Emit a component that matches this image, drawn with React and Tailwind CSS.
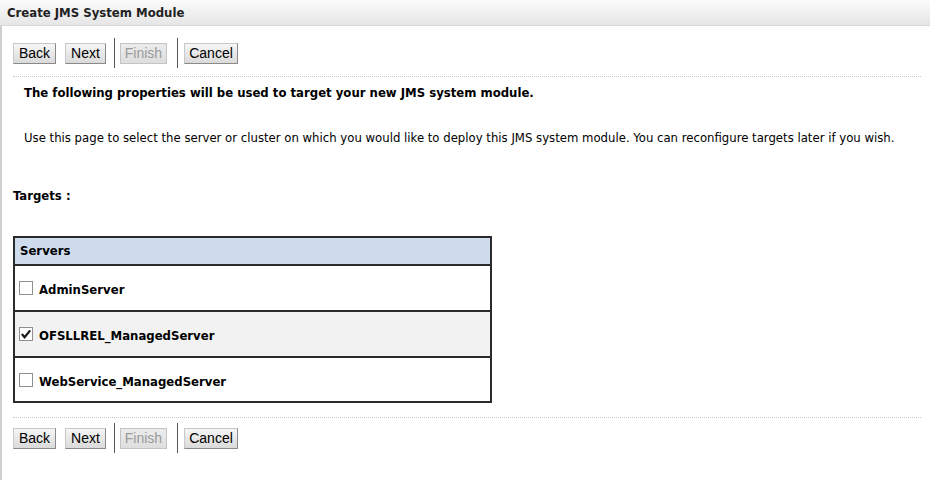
import React from 'react'

const font = "font-['Tahoma','DejaVu_Sans_Condensed','Liberation_Sans',sans-serif]"

const Btn = ({ children, disabled, w }) => (
  <button
    className={`${w} h-[21px] border text-[14px] leading-none font-['Liberation_Sans',Arial,sans-serif] bg-gradient-to-b ${
      disabled
        ? 'from-[#ececec] to-[#dedede] border-[#c4c4c4] text-[#9a9a9a]'
        : 'from-[#f6f6f6] to-[#dadada] border-t-[#c8c8c8] border-l-[#c8c8c8] border-r-[#8a8a8a] border-b-[#8a8a8a] text-black'
    }`}
  >
    {children}
  </button>
)

const Sep = () => <div className="w-px h-[30px] bg-[#555]" />

const ButtonBar = () => (
  <div className="flex items-center h-[30px] pl-[11px]">
    <Btn w="w-[43px]">Back</Btn>
    <div className="w-[9px]" />
    <Btn w="w-[41px]">Next</Btn>
    <div className="w-[8px]" />
    <Sep />
    <div className="w-[5px]" />
    <Btn w="w-[47px]" disabled>Finish</Btn>
    <div className="w-[10px]" />
    <Sep />
    <div className="w-[6px]" />
    <Btn w="w-[54px]">Cancel</Btn>
  </div>
)

const Checkbox = ({ checked }) => (
  <span className="w-[14px] h-[14px] border border-[#8f8f8f] bg-white flex items-center justify-center shrink-0">
    {checked && (
      <svg width="12" height="12" viewBox="0 0 12 12">
        <path d="M1.8 6 L4.6 9.2 L10.2 2.4" fill="none" stroke="#1a1a1a" strokeWidth="2.2" />
      </svg>
    )}
  </span>
)

const servers = [
  { name: 'AdminServer', checked: false, h: 'h-[46px]' },
  { name: 'OFSLLREL_ManagedServer', checked: true, h: 'h-[46px]' },
  { name: 'WebService_ManagedServer', checked: false, h: 'h-[43px]' },
]

export default function App() {
  return (
    <div className={`w-[930px] h-[480px] bg-white overflow-hidden text-black ${font}`}>
      <div className="h-[26px] bg-gradient-to-b from-[#fbfbfb] to-[#e6e6e6] border-b border-[#d6d6d6] pl-[7px] flex items-center">
        <span className="text-[13px] leading-[16px] font-bold text-[#222]">Create JMS System Module</span>
      </div>
      <div className="border-l-2 border-[#cfcfcf] h-[454px]">
        <div className="pt-[12px] pr-[9px] text-[13px] leading-[16px]">
          <ButtonBar />
          <div className="ml-[11px] mt-[8px] border-t border-dotted border-[#c4c4c4]" />
          <div className="pl-[22px] pt-[8px] font-bold">
            The following properties will be used to target your new JMS system module.
          </div>
          <div className="pl-[22px] pt-[29px]">
            Use this page to select the server or cluster on which you would like to deploy this JMS system module. You can reconfigure targets later if you wish.
          </div>
          <div className="pl-[11px] pt-[42px] font-bold">Targets :</div>
          <div className="ml-[11px] mt-[32px] w-[479px] border-2 border-[#2a2a2a]">
            <div className="h-[28px] bg-[#cfdcee] flex items-center pl-[5px] font-bold border-b-2 border-[#2a2a2a]">
              Servers
            </div>
            {servers.map((s, i) => (
              <div
                key={s.name}
                className={`${s.h} flex items-center gap-[6px] pl-[4px] font-bold ${
                  i === 1 ? 'bg-[#f2f2f2]' : 'bg-white'
                } ${i < servers.length - 1 ? 'border-b-2 border-[#2a2a2a]' : ''}`}
              >
                <Checkbox checked={s.checked} />
                <span className="pt-[4px]">{s.name}</span>
              </div>
            ))}
          </div>
          <div className="ml-[11px] mt-[14px] border-t border-dotted border-[#c4c4c4]" />
          <div className="pt-[5px]">
            <ButtonBar />
          </div>
        </div>
      </div>
    </div>
  )
}
